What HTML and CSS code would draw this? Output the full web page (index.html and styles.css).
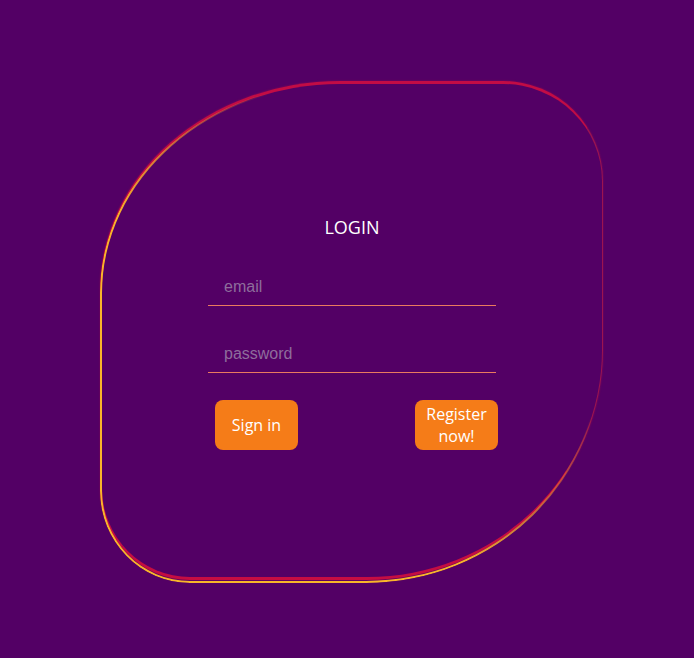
FILE: index.html
```html
<!DOCTYPE html>
<html>
<head>
<meta charset="utf-8">
<link rel="stylesheet" href="styles.css">
</head>
<body>
<div class="page">
  <div class="shape">
    <h1 class="title">LOGIN</h1>
    <form class="form">
      <input class="field" type="text" placeholder="email">
      <input class="field" type="text" placeholder="password">
      <div class="actions">
        <button type="button" class="btn">Sign in</button>
        <button type="button" class="btn">Register now!</button>
      </div>
    </form>
  </div>
</div>
</body>
</html>
```
FILE: styles.css
```css
html, body {
  margin: 0;
  padding: 0;
  background: #530065;
  height: 100%;
}
.page {
  padding: 81px 0 0 100px;
}
.shape {
  position: relative;
  box-sizing: border-box;
  width: 504px;
  height: 499px;
  display: flex;
  flex-direction: column;
  align-items: center;
  padding-top: 134px;
}
.shape::before,
.shape::after {
  content: "";
  position: absolute;
  inset: 0;
  box-sizing: border-box;
  border-style: solid;
  border-radius: 240px 100px 236px 90px / 210px 100px 230px 92px;
  pointer-events: none;
}
.shape::before {
  right: 1px;
  border-width: 3px 1px 3px 2px;
  border-color: #c20c45 #9c1450 #c50d42 #c20c45;
  box-shadow: 0 0 2px rgba(200, 20, 70, 0.5);
}
.shape::after {
  inset: 2px 2px -3px 0;
  border-width: 2px;
  border-color: #f9b52a;
  box-shadow: 0 0 2px rgba(250, 160, 40, 0.7);
  -webkit-mask-image: linear-gradient(45deg, #000 38%, rgba(0,0,0,0.6) 50%, transparent 66%);
  mask-image: linear-gradient(45deg, #000 38%, rgba(0,0,0,0.6) 50%, transparent 66%);
}
.title {
  margin: 0;
  font-family: "Open Sans", "Noto Sans", sans-serif;
  font-weight: 400;
  font-size: 18px;
  line-height: 24px;
  color: #ffffff;
}
.form {
  width: 288px;
  display: flex;
  flex-direction: column;
  margin-top: 29px;
}
.field {
  box-sizing: border-box;
  height: 38px;
  background: transparent;
  border: 0;
  border-bottom: 1px solid #eb7a5e;
  padding: 0 16px;
  font-family: "Liberation Sans", Arial, sans-serif;
  font-size: 16px;
  color: #ffffff;
  outline: none;
}
.field + .field {
  margin-top: 29px;
}
.field::placeholder {
  color: #8e6d9c;
}
.actions {
  display: flex;
  justify-content: space-between;
  width: 283px;
  margin-left: 7px;
  margin-top: 27px;
}
.btn {
  width: 83px;
  height: 50px;
  border: none;
  border-radius: 8px;
  background: #f57c18;
  color: #ffffff;
  font-family: "Open Sans", "Noto Sans", sans-serif;
  font-size: 16px;
  line-height: 22px;
  padding: 0 6px;
}
```
